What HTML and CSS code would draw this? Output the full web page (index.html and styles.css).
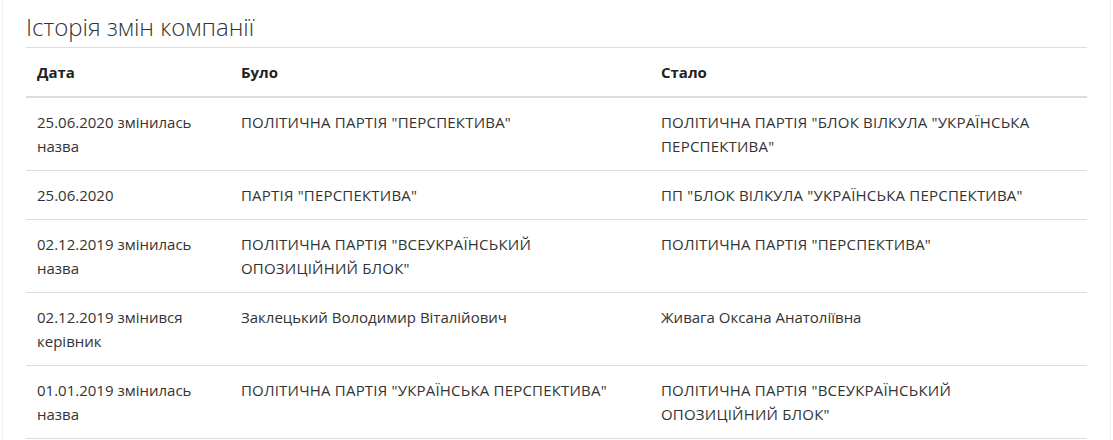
FILE: index.html
```html
<!DOCTYPE html>
<html lang="uk">
<head>
<meta charset="utf-8">
<link rel="stylesheet" href="styles.css">
</head>
<body>
<div class="panel">
  <h3 class="title">Історія змін компанії</h3>
  <table class="history">
    <colgroup>
      <col class="c-date">
      <col class="c-was">
      <col class="c-now">
    </colgroup>
    <thead>
      <tr><th>Дата</th><th>Було</th><th>Стало</th></tr>
    </thead>
    <tbody>
      <tr><td>25.06.2020 змінилась назва</td><td class="up">ПОЛІТИЧНА ПАРТІЯ "ПЕРСПЕКТИВА"</td><td class="up">ПОЛІТИЧНА ПАРТІЯ "БЛОК ВІЛКУЛА "УКРАЇНСЬКА ПЕРСПЕКТИВА"</td></tr>
      <tr><td>25.06.2020</td><td class="up">ПАРТІЯ "ПЕРСПЕКТИВА"</td><td class="up">ПП "БЛОК ВІЛКУЛА "УКРАЇНСЬКА ПЕРСПЕКТИВА"</td></tr>
      <tr><td>02.12.2019 змінилась назва</td><td class="up">ПОЛІТИЧНА ПАРТІЯ "ВСЕУКРАЇНСЬКИЙ ОПОЗИЦІЙНИЙ БЛОК"</td><td class="up">ПОЛІТИЧНА ПАРТІЯ "ПЕРСПЕКТИВА"</td></tr>
      <tr><td>02.12.2019 змінився керівник</td><td>Заклецький Володимир Віталійович</td><td>Живага Оксана Анатоліївна</td></tr>
      <tr><td>01.01.2019 змінилась назва</td><td class="up">ПОЛІТИЧНА ПАРТІЯ "УКРАЇНСЬКА ПЕРСПЕКТИВА"</td><td class="up">ПОЛІТИЧНА ПАРТІЯ "ВСЕУКРАЇНСЬКИЙ ОПОЗИЦІЙНИЙ БЛОК"</td></tr>
    </tbody>
  </table>
</div>
</body>
</html>
```

FILE: styles.css
```css
html, body {
  margin: 0;
  padding: 0;
  background: #fff;
}
body {
  font-family: "Open Sans", "Noto Sans", sans-serif;
  color: #333;
  font-size: 15px;
}
.panel {
  margin-left: 2px;
  width: 1109px;
  height: 440px;
  box-sizing: border-box;
  border-left: 1px solid #efefef;
  border-right: 1px solid #efefef;
  padding: 0 23px;
}
.title {
  margin: 0;
  height: 47px;
  box-sizing: border-box;
  padding-top: 13px;
  font-size: 24px;
  line-height: 28px;
  font-weight: 300;
  color: #333;
}
.history {
  width: 100%;
  border-collapse: collapse;
  table-layout: fixed;
}
.c-date { width: 204px; }
.c-was { width: 420px; }
.history th,
.history td {
  text-align: left;
  vertical-align: top;
  padding: 12px 11px;
  line-height: 24px;
  border-top: 1px solid #dddddd;
}
.history td:nth-child(2) { padding-right: 30px; }
.history td:nth-child(3) { padding-right: 32px; }
.history td.up { letter-spacing: 0.2px; }
.history th {
  font-weight: 700;
  color: #222;
  border-bottom: 2px solid #dddddd;
}
.history tbody tr:first-child td {
  border-top: 0;
}
.history tbody tr:last-child td {
  border-bottom: 1px solid #dddddd;
}
```
